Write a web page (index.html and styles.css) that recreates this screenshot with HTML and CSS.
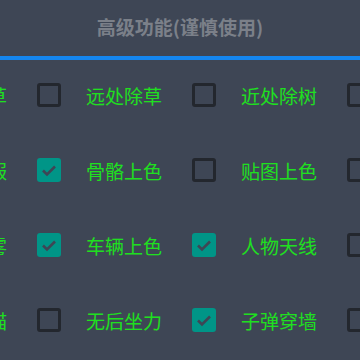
FILE: index.html
```html
<!DOCTYPE html>
<html lang="zh">
<head>
    <meta charset="UTF-8">
    <title>高级功能</title>
    <link rel="stylesheet" href="styles.css">
</head>
<body>
<!--标题栏-->
<header>高级功能(谨慎使用)</header>
<div class="line"></div>
<div class="list">
    <div class="row">
        <div class="item"><span class="label">近处除草</span><span class="box"></span></div>
        <div class="item"><span class="label">远处除草</span><span class="box"></span></div>
        <div class="item"><span class="label">近处除树</span><span class="box"></span></div>
    </div>
    <div class="row">
        <div class="item"><span class="label">人物去服</span><span class="box checked"><svg viewBox="0 0 24 24"><path d="M6 12.5l4 4 8-8"/></svg></span></div>
        <div class="item"><span class="label">骨骼上色</span><span class="box"></span></div>
        <div class="item"><span class="label">贴图上色</span><span class="box"></span></div>
    </div>
    <div class="row">
        <div class="item"><span class="label">去除烟雾</span><span class="box checked"><svg viewBox="0 0 24 24"><path d="M6 12.5l4 4 8-8"/></svg></span></div>
        <div class="item"><span class="label">车辆上色</span><span class="box checked"><svg viewBox="0 0 24 24"><path d="M6 12.5l4 4 8-8"/></svg></span></div>
        <div class="item"><span class="label">人物天线</span><span class="box"></span></div>
    </div>
    <div class="row">
        <div class="item"><span class="label">开启自瞄</span><span class="box"></span></div>
        <div class="item"><span class="label">无后坐力</span><span class="box checked"><svg viewBox="0 0 24 24"><path d="M6 12.5l4 4 8-8"/></svg></span></div>
        <div class="item"><span class="label">子弹穿墙</span><span class="box"></span></div>
    </div>
</div>
</body>
</html>
```

FILE: styles.css
```css
body {
    margin: 0;
    padding: 0;
    background-color: #3e4655;
    font-family: "Noto Sans CJK SC", "Noto Sans", sans-serif;
    overflow: hidden;
}

header {
    height: 56px;
    line-height: 54px;
    text-align: center;
    color: #7b8089;
    font-size: 19px;
    font-weight: bold;
}

.line {
    height: 4px;
    background-color: #1586ef;
}

.list {
    display: flex;
    flex-direction: column;
    row-gap: 51px;
    padding-top: 23px;
}

.row {
    display: flex;
    margin-left: -69px;
}

.item {
    flex: 0 0 155px;
    display: flex;
    align-items: center;
    height: 24px;
}

.label {
    width: 106px;
    color: #1fe01f;
    font-size: 19px;
    white-space: nowrap;
}

.box {
    flex: 0 0 auto;
    box-sizing: border-box;
    width: 24px;
    height: 24px;
    border: 3px solid #23272e;
    border-radius: 3px;
}

.box.checked {
    border: none;
    background-color: #009587;
}

.box svg {
    display: block;
    width: 24px;
    height: 24px;
    fill: none;
    stroke: #3e4655;
    stroke-width: 2.6;
}
```
